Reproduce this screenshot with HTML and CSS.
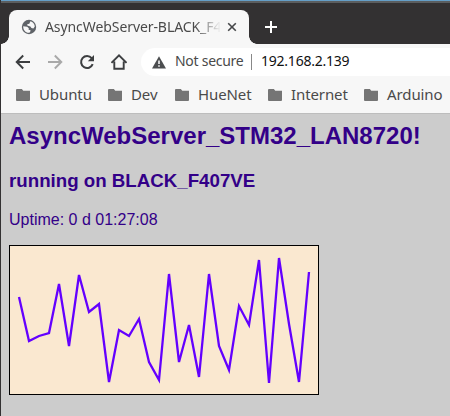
FILE: index.html
```html
<!DOCTYPE html>
<html lang="en">
<head>
<meta charset="utf-8">
<title>AsyncWebServer-BLACK_F407VE</title>
<link rel="stylesheet" href="styles.css">
</head>
<body>
<div class="window">
  <header class="tabstrip">
    <div class="tab">
      <svg class="globe" width="16" height="16" viewBox="0 0 16 16"><circle cx="8" cy="8" r="7.2" fill="#5f6368"/><path d="M2.2 7.2 6.2 7.8 7.8 9.2 7.6 10.8 9.6 11.2 9 13.6C5 14.4 2 11.2 2.2 7.2ZM9.4 2.3C12 3 13.7 5.2 13.8 7.6L12.4 9.4 10.4 9 9.4 7.4 6.4 6.6 6.2 5.2 8.3 4.8Z" fill="#f7f7f7"/></svg>
      <span class="tab-title">AsyncWebServer-BLACK_F4</span>
      <svg class="close" width="10" height="10" viewBox="0 0 10 10"><path d="M1.2 1.2 8.8 8.8M8.8 1.2 1.2 8.8" stroke="#454749" stroke-width="1.6"/></svg>
    </div>
    <svg class="plus" width="12" height="12" viewBox="0 0 12 12"><path d="M6 0V12M0 6H12" stroke="#fff" stroke-width="2"/></svg>
  </header>
  <nav class="toolbar">
    <svg width="16" height="16" viewBox="0 0 16 16"><path d="M15 8H2M8.2 1.5 1.7 8 8.2 14.5" fill="none" stroke="#3c3e40" stroke-width="1.9"/></svg>
    <svg width="16" height="16" viewBox="0 0 16 16"><path d="M1 8H14M7.8 1.5 14.3 8 7.8 14.5" fill="none" stroke="#a9a9a9" stroke-width="1.9"/></svg>
    <svg width="16" height="16" viewBox="0 0 16 16"><path d="M13.7 10.2A6 6 0 1 1 12.7 4.2" fill="none" stroke="#3c3e40" stroke-width="2"/><path d="M15 1V7.2H8.8Z" fill="#3c3e40"/></svg>
    <svg width="16" height="16" viewBox="0 0 16 16"><path d="M.5 8.9 8 1.4 15.5 8.9M3.3 7.4V14.8H12.7V7.4" fill="none" stroke="#3c3e40" stroke-width="1.9"/></svg>
    <div class="address">
      <svg width="14" height="13" viewBox="0 0 14 13"><path d="M7 .2 14 12.5H0Z" fill="#4c4e50"/><path d="M7 4.6V8M7 9.2V10.8" stroke="#fff" stroke-width="1.5"/></svg>
      <span class="secure">Not secure</span>
      <span class="divider"></span>
      <span class="url">192.168.2.139</span>
    </div>
  </nav>
  <nav class="bookmarks">
    <span class="bookmark b1"><i class="folder"></i><b>Ubuntu</b></span>
    <span class="bookmark b2"><i class="folder"></i><b>Dev</b></span>
    <span class="bookmark b3"><i class="folder"></i><b>HueNet</b></span>
    <span class="bookmark b4"><i class="folder"></i><b>Internet</b></span>
    <span class="bookmark b5"><i class="folder"></i><b>Arduino</b></span>
  </nav>
  <main class="page">
    <h2>AsyncWebServer_STM32_LAN8720!</h2>
    <h3>running on BLACK_F407VE</h3>
    <p>Uptime: 0 d 01:27:08</p>
    <svg class="chart" width="310" height="150" viewBox="0 0 310 150">
      <rect x=".5" y=".5" width="309" height="149" fill="#fae8d0" stroke="#000"/>
      <polyline fill="none" stroke="#6400ff" stroke-width="2.3" points="10,52 20,96 30,91 40,88 50,39 60,101 70,30 80,67 90,59 100,137 110,85 120,91 130,74 140,117 150,135 160,29 170,117 180,80 190,132 200,29 210,101 220,125 230,61 240,80 250,15 260,138 270,13 280,79 290,137 300,27"/>
    </svg>
  </main>
</div>
</body>
</html>
```
FILE: styles.css
```css
* { box-sizing: border-box; }
body { margin: 0; overflow: hidden; }
.window {
  height: 416px;
  display: flex;
  flex-direction: column;
  border-left: 1px solid #333132;
  background: #f7f7f7;
  font-family: "Noto Sans", sans-serif;
  font-size: 15px;
  color: #4a4a4a;
}
svg { display: block; flex: none; }
.tabstrip {
  height: 44px;
  flex: none;
  display: flex;
  padding: 10px 0 0 8px;
  background: linear-gradient(#659fc8 0 1px, #5b5e60 1px 3px, #333132 3px);
}
.tab {
  position: relative;
  width: 240px;
  height: 34px;
  display: flex;
  align-items: center;
  padding: 0 12px;
  border-radius: 8px 8px 0 0;
  background: #f7f7f7;
}
.tab::before, .tab::after {
  content: "";
  position: absolute;
  bottom: 0;
  width: 8px;
  height: 8px;
}
.tab::before { left: -8px; background: radial-gradient(circle at 0 0, transparent 7.5px, #f7f7f7 8px); }
.tab::after { right: -8px; background: radial-gradient(circle at 100% 0, transparent 7.5px, #f7f7f7 8px); }
.tab-title {
  width: 176px;
  margin-left: 8px;
  overflow: hidden;
  white-space: nowrap;
  font-size: 14px;
  line-height: 20px;
  letter-spacing: -.08px;
  -webkit-mask-image: linear-gradient(90deg, #000 150px, transparent 176px);
  mask-image: linear-gradient(90deg, #000 150px, transparent 176px);
}
.close { margin-left: 7px; }
.plus { margin: 11px 0 0 16px; }
.toolbar {
  height: 36px;
  flex: none;
  display: flex;
  align-items: center;
  gap: 16px;
  padding-left: 14px;
}
.address {
  flex: 1;
  height: 28px;
  display: flex;
  align-items: center;
  margin-left: -2px;
  padding-left: 11px;
  border-radius: 14px 0 0 14px;
  background: #fff;
  font-size: 14px;
  line-height: 18px;
  white-space: nowrap;
}
.address span { position: relative; top: -1px; }
.secure { width: 69px; margin-left: 9px; letter-spacing: -.27px; }
.address .divider { top: 0; width: 1px; height: 16px; margin: 0 9px 0 7px; background: #888; }
.url { color: #111; letter-spacing: -.23px; }
.bookmarks {
  height: 33px;
  flex: none;
  display: flex;
  align-items: center;
  padding: 0 0 3px 15px;
  line-height: 20px;
  white-space: nowrap;
}
.bookmark { display: flex; align-items: center; flex: none; }
.bookmark b { margin: -2px 0 0 9px; font-weight: 400; letter-spacing: -.1px; }
.b1 { width: 92px; }
.b2 { width: 67px; }
.b3 { width: 93px; }
.b4 { width: 96px; }
.folder {
  width: 14px;
  height: 12px;
  background: #757575;
  border-radius: 1px;
  clip-path: polygon(0 0, 42% 0, 52% 15%, 100% 15%, 100% 100%, 0 100%);
}
.page {
  flex: 1;
  border-top: 1px solid #bdbdbd;
  padding: 8px;
  background: #ccc;
  color: #308;
  font-family: "Liberation Sans", Arial, sans-serif;
  font-size: 16px;
}
.page h2 { margin: 0 0 20px; font-size: 24px; line-height: 28px; white-space: nowrap; }
.page h3 { margin: 0 0 19px; font-size: 18.72px; line-height: 22px; }
.page p { margin: 0 0 16px; line-height: 18px; }
```
